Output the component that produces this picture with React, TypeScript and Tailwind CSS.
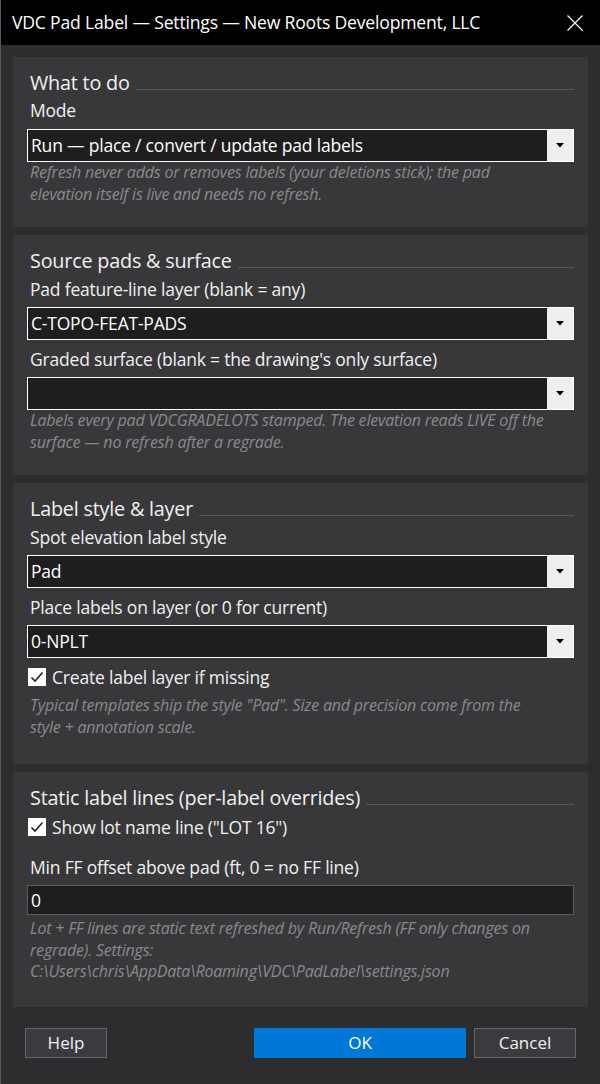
import React from "react";

const FONT = { fontFamily: '"Open Sans", "Noto Sans", "Liberation Sans", sans-serif' };

function SectionTitle({ children }: { children: React.ReactNode }) {
  return (
    <div className="flex items-end h-[26px] pl-[3px]">
      <span className="text-[19.8px] leading-[26px] text-[#f0f0f0] whitespace-nowrap tracking-[-0.2px]">
        {children}
      </span>
      <div className="flex-1 ml-[6px] mb-[6px] h-px bg-[#58585c]" />
    </div>
  );
}

function Label({ children, className = "" }: { children: React.ReactNode; className?: string }) {
  return (
    <div className={`px-[3px] text-[17.5px] leading-[22px] text-[#f0f0f0] tracking-[-0.2px] ${className}`}>
      {children}
    </div>
  );
}

function Combo({ value, className = "" }: { value: string; className?: string }) {
  return (
    <div className={`flex h-[33px] border border-white bg-[#1e1e1e] ${className}`}>
      <div className="flex-1 flex items-center px-[3px] text-[17.5px] text-white tracking-[-0.2px]">{value}</div>
      <div className="w-[26px] bg-[#efefef] flex items-center justify-center">
        <svg width="8" height="5" viewBox="0 0 8 5">
          <path d="M0 0 H8 L4 4.5 Z" fill="#000" />
        </svg>
      </div>
    </div>
  );
}

function Hint({ children, className = "" }: { children: React.ReactNode; className?: string }) {
  return (
    <div className={`px-[3px] text-[16px] leading-[21.5px] italic text-[#8a8a8e] tracking-[-0.2px] ${className}`}>
      {children}
    </div>
  );
}

function Check({ label, className = "" }: { label: string; className?: string }) {
  return (
    <div className={`flex items-center gap-[6px] h-[18px] ${className}`}>
      <div className="w-[18px] h-[18px] bg-white flex items-center justify-center ml-px">
        <svg width="14" height="12" viewBox="0 0 14 12">
          <path d="M1.5 6.5 L5 10 L12.5 1.5" stroke="#222" strokeWidth="1.6" fill="none" />
        </svg>
      </div>
      <span className="text-[17.5px] leading-[22px] text-[#f0f0f0] tracking-[-0.2px]">{label}</span>
    </div>
  );
}

function Panel({ children, className = "" }: { children: React.ReactNode; className?: string }) {
  return <div className={`bg-[#38383b] px-[14px] ${className}`}>{children}</div>;
}

export default function App() {
  return (
    <div style={FONT} className="w-[600px] h-[1084px] bg-[#2d2d30] border-l border-[#5a5a5e] overflow-hidden flex flex-col">
      {/* TITLE BAR */}
      <div className="h-[45px] bg-black flex items-center justify-between pl-[11px] pr-[17px] shrink-0">
        <span className="text-[17.6px] text-white tracking-[-0.2px]">
          VDC Pad Label — Settings — New Roots Development, LLC
        </span>
        <svg width="16" height="16" viewBox="0 0 16 16">
          <path d="M0.5 0.5 L15.5 15.5 M15.5 0.5 L0.5 15.5" stroke="#fff" strokeWidth="1.2" />
        </svg>
      </div>

      <div className="pl-[12px] pr-[12px] pt-[12px] flex flex-col gap-[8px]">
        {/* WHAT TO DO */}
        <Panel className="h-[170px] pt-[13px]">
          <SectionTitle>What to do</SectionTitle>
          <Label className="mt-[3px]">Mode</Label>
          <Combo className="mt-[8px]" value="Run — place / convert / update pad labels" />
          <Hint>
            Refresh never adds or removes labels (your deletions stick); the pad
            <br />
            elevation itself is live and needs no refresh.
          </Hint>
        </Panel>

        {/* SOURCE */}
        <Panel className="h-[240px] pt-[13px]">
          <SectionTitle>Source pads &amp; surface</SectionTitle>
          <Label className="mt-[4px]">Pad feature-line layer (blank = any)</Label>
          <Combo className="mt-[7px]" value="C-TOPO-FEAT-PADS" />
          <Label className="mt-[8px]">Graded surface (blank = the drawing's only surface)</Label>
          <Combo className="mt-[7px]" value="" />
          <Hint>
            Labels every pad VDCGRADELOTS stamped. The elevation reads LIVE off the
            <br />
            surface — no refresh after a regrade.
          </Hint>
        </Panel>

        {/* LABEL STYLE */}
        <Panel className="h-[281px] pt-[13px]">
          <SectionTitle>Label style &amp; layer</SectionTitle>
          <Label className="mt-[4px]">Spot elevation label style</Label>
          <Combo className="mt-[7px]" value="Pad" />
          <Label className="mt-[8px]">Place labels on layer (or 0 for current)</Label>
          <Combo className="mt-[7px]" value="0-NPLT" />
          <Check className="mt-[10px]" label="Create label layer if missing" />
          <Hint className="mt-[9px]">
            Typical templates ship the style "Pad". Size and precision come from the
            <br />
            style + annotation scale.
          </Hint>
        </Panel>

        {/* STATIC LINES */}
        <Panel className="h-[235px] pt-[13px]">
          <SectionTitle>Static label lines (per-label overrides)</SectionTitle>
          <Check className="mt-[7px]" label={'Show lot name line ("LOT 16")'} />
          <Label className="mt-[20px]">Min FF offset above pad (ft, 0 = no FF line)</Label>
          <div className="mt-[7px] h-[30px] border border-[#5c5c60] bg-[#1e1e1e] flex items-center px-[3px] text-[17.5px] text-white">
            0
          </div>
          <Hint className="mt-[3px]">
            Lot + FF lines are static text refreshed by Run/Refresh (FF only changes on
            <br />
            regrade). Settings:
            <br />
            C:\Users\chris\AppData\Roaming\VDC\PadLabel\settings.json
          </Hint>
        </Panel>
      </div>

      {/* BUTTONS */}
      <div className="mt-[21px] flex items-center pl-[24px] pr-[24px]">
        <button className="w-[82px] h-[30px] bg-[#3b3b3f] border border-[#66666a] text-[17px] text-[#f0f0f0]">
          Help
        </button>
        <div className="flex-1" />
        <button className="w-[212px] h-[30px] bg-[#0078d7] text-[17px] text-white">OK</button>
        <button className="ml-[8px] w-[102px] h-[30px] bg-[#3b3b3f] border border-[#66666a] text-[17px] text-[#f0f0f0]">
          Cancel
        </button>
      </div>
    </div>
  );
}
